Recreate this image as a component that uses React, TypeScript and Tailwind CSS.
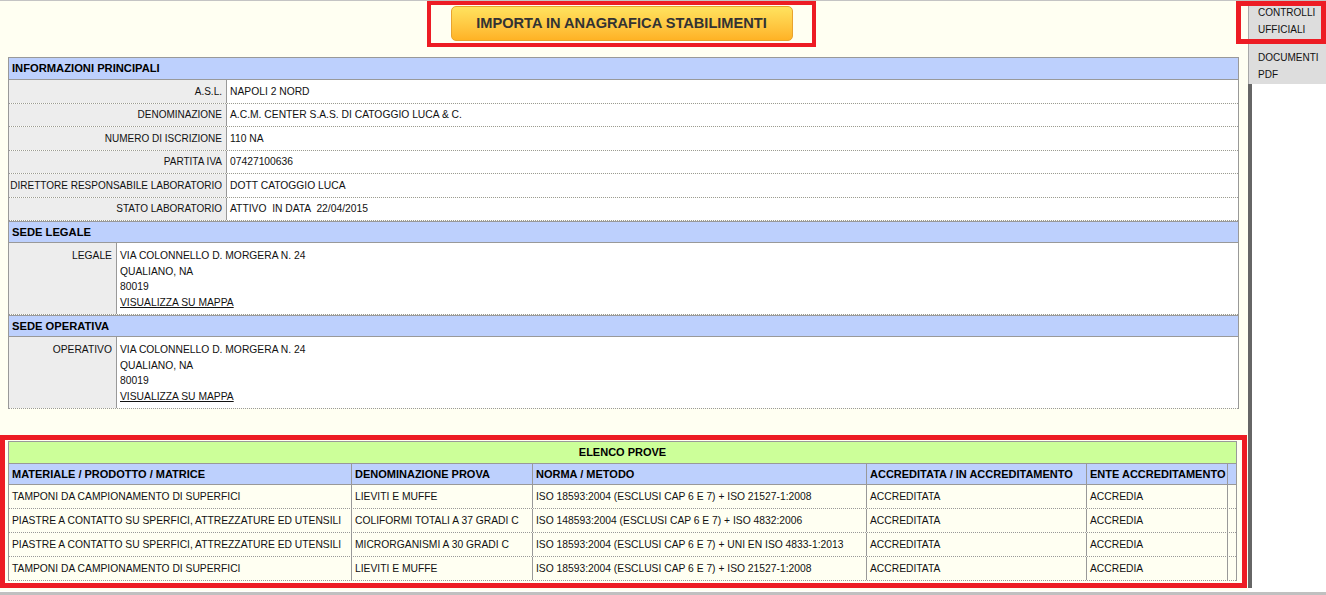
import React from "react";

const infoRows: [string, string][] = [
  ["A.S.L.", "NAPOLI 2 NORD"],
  ["DENOMINAZIONE", "A.C.M. CENTER S.A.S. DI CATOGGIO LUCA & C."],
  ["NUMERO DI ISCRIZIONE", "110 NA"],
  ["PARTITA IVA", "07427100636"],
  ["DIRETTORE RESPONSABILE LABORATORIO", "DOTT CATOGGIO LUCA"],
  ["STATO LABORATORIO", "ATTIVO  IN DATA  22/04/2015"],
];

const prove: string[][] = [
  ["TAMPONI DA CAMPIONAMENTO DI SUPERFICI", "LIEVITI E MUFFE", "ISO 18593:2004 (ESCLUSI CAP 6 E 7) + ISO 21527-1:2008", "ACCREDITATA", "ACCREDIA"],
  ["PIASTRE A CONTATTO SU SPERFICI, ATTREZZATURE ED UTENSILI", "COLIFORMI TOTALI A 37 GRADI C", "ISO 148593:2004 (ESCLUSI CAP 6 E 7) + ISO 4832:2006", "ACCREDITATA", "ACCREDIA"],
  ["PIASTRE A CONTATTO SU SPERFICI, ATTREZZATURE ED UTENSILI", "MICRORGANISMI A 30 GRADI C", "ISO 18593:2004 (ESCLUSI CAP 6 E 7) + UNI EN ISO 4833-1:2013", "ACCREDITATA", "ACCREDIA"],
  ["TAMPONI DA CAMPIONAMENTO DI SUPERFICI", "LIEVITI E MUFFE", "ISO 18593:2004 (ESCLUSI CAP 6 E 7) + ISO 21527-1:2008", "ACCREDITATA", "ACCREDIA"],
];

function SectionHeader({ title, first }: { title: string; first?: boolean }) {
  return (
    <div
      className={
        "h-[22px] flex items-center pl-[3px] bg-[#bdd0fd] font-bold text-[11.2px] text-black border-b border-[#999] " +
        (first ? "" : "border-t")
      }
    >
      {title}
    </div>
  );
}

function Address({ label }: { label: string }) {
  return (
    <div className="flex border-b border-dotted border-[#999] h-[72px]">
      <div className="w-[108px] bg-[#ededed] border-r border-[#999] text-right pr-[4px] pt-[5px] leading-[15.5px]">
        {label}
      </div>
      <div className="flex-1 bg-white pl-[3px] pt-[5px] leading-[15.5px]">
        <div>VIA COLONNELLO D. MORGERA N. 24</div>
        <div>QUALIANO, NA</div>
        <div>80019</div>
        <div className="underline">VISUALIZZA SU MAPPA</div>
      </div>
    </div>
  );
}

export default function App() {
  const cols = "grid grid-cols-[343px_181px_334px_220px_141px_1fr]";
  return (
    <div className="relative w-[1326px] h-[595px] bg-white border-t border-[#c4c4c4] overflow-hidden font-['Liberation_Sans',Arial,sans-serif] text-[10.3px] text-[#111]">
      <div className="flex h-[590px]">
        <main className="w-[1248px] bg-[#fffff2] flex flex-col">
          <div className="ml-[427px] w-[389px] h-[46px] border-[4px] border-[#ed1c24] flex justify-center pt-[1px]">
            <button className="w-[342px] h-[35px] rounded-[5px] border border-[#e8a32e] bg-gradient-to-b from-[#ffe35e] to-[#ffb224] text-[14.6px] font-bold text-[#333] font-['Liberation_Sans',Arial,sans-serif]">
              IMPORTA IN ANAGRAFICA STABILIMENTI
            </button>
          </div>

          <div className="mt-[10px] ml-[8px] w-[1231px] border-x border-t border-[#999]">
            <SectionHeader title="INFORMAZIONI PRINCIPALI" first />
            {infoRows.map(([l, v]) => (
              <div key={l} className="flex h-[23.5px] border-b border-dotted border-[#999]">
                <div className="w-[218px] bg-[#ededed] border-r border-[#999] flex items-center justify-end pr-[4px] whitespace-nowrap text-[10px]">
                  {l}
                </div>
                <div className="flex-1 bg-white flex items-center pl-[3px] whitespace-pre">{v}</div>
              </div>
            ))}
            <SectionHeader title="SEDE LEGALE" />
            <Address label="LEGALE" />
            <SectionHeader title="SEDE OPERATIVA" />
            <Address label="OPERATIVO" />
          </div>

          <div className="mt-[26px] w-[1247px] h-[153px] border-[5px] border-[#ed1c24] pl-[3px] pt-[1px]">
            <div className="w-[1229px] border-x border-t border-[#999]">
              <div className="h-[22px] bg-[#ccff99] border-b border-[#999] flex items-center justify-center font-bold text-[11px] text-black">
                ELENCO PROVE
              </div>
              <div className={cols + " h-[21px] bg-[#bdd0fd] border-b border-[#999] font-bold text-[11px] text-black"}>
                {["MATERIALE / PRODOTTO / MATRICE", "DENOMINAZIONE PROVA", "NORMA / METODO", "ACCREDITATA / IN ACCREDITAMENTO", "ENTE ACCREDITAMENTO", ""].map(
                  (h, i) => (
                    <div key={i} className={"flex items-center pl-[3px] whitespace-nowrap " + (i < 5 ? "border-r border-[#999]" : "")}>
                      {h}
                    </div>
                  )
                )}
              </div>
              {prove.map((r, ri) => (
                <div key={ri} className={cols + " h-[24px] border-b border-dotted border-[#999]"}>
                  {[...r, ""].map((c, i) => (
                    <div key={i} className={"flex items-center pl-[3px] whitespace-nowrap " + (i < 5 ? "border-r border-[#999]" : "")}>
                      {c}
                    </div>
                  ))}
                </div>
              ))}
            </div>
          </div>
        </main>

        <aside className="w-[78px] flex flex-col text-[10px]">
          <div className="h-[38px] bg-[#dddddd] border-l border-[#a8a8a8] pl-[9px] pt-[3px] leading-[17px]">
            <div>CONTROLLI</div>
            <div>UFFICIALI</div>
          </div>
          <div className="mt-[5px] h-[40px] bg-[#dddddd] border-l border-[#a8a8a8] pl-[9px] pt-[5px] leading-[17px]">
            <div>DOCUMENTI</div>
            <div>PDF</div>
          </div>
          <div className="w-[4px] flex-1 mb-[3px] bg-[#666666]" />
        </aside>
      </div>
      <div className="mt-[1px] h-[3px] bg-[#c0c0c0]" />

      <div className="absolute left-[1236px] top-0 w-[90px] h-[43px] border-[5px] border-[#ed1c24]" />
    </div>
  );
}
